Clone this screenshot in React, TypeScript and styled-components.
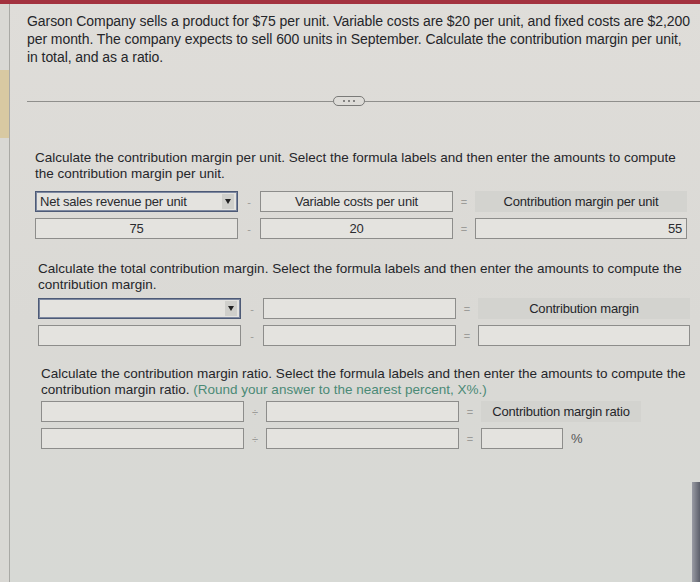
import React from 'react';
import styled, { createGlobalStyle } from 'styled-components';

const GlobalStyle = createGlobalStyle`
	html, body {
		margin: 0;
		padding: 0;
		width: 700px;
		height: 582px;
		overflow: hidden;
		background: #dcdbd7;
	}
	body {
		font-family: "Liberation Sans", Arial, sans-serif;
		color: #25262a;
	}
`

const Page = styled.div`
	width: 700px;
	height: 582px;
	display: flex;
	flex-direction: column;
	background: linear-gradient(180deg, #dfddd9 0%, #dad9d5 55%, #d7d9d5 100%);
`

const TopBar = styled.div`
	height: 4px;
	flex-shrink: 0;
	background: #a3323f;
`

const Frame = styled.div`
	flex: 1;
	display: flex;
`

const LeftRail = styled.div`
	width: 9px;
	flex-shrink: 0;
	border-right: 1px solid #a9a9a5;
	background: #d9d8d4;
	padding-top: 66px;

	.tab {
		height: 68px;
		background: #d8c9a2;
	}
`

const Main = styled.div`
	flex: 1;
	min-width: 0;
	display: flex;
	flex-direction: column;
	padding-left: 17px;
`

const RightRail = styled.div`
	width: 8px;
	flex-shrink: 0;
	display: flex;
	flex-direction: column;
	justify-content: flex-end;

	.edge {
		height: 100px;
		background: linear-gradient(90deg, #9a9ca4, #5c5f6a);
	}
`

const Question = styled.p`
	margin: 8px 0 0 0;
	font-size: 14px;
	line-height: 18px;
	letter-spacing: -0.07px;
	white-space: nowrap;
`

const Divider = styled.div`
	margin-top: 30px;
	margin-right: -8px;
	display: flex;
	align-items: center;

	&::before, &::after {
		content: '';
		flex: 1;
		height: 1px;
		background: #8f8f8c;
	}
	&::before {
		flex: 0 0 306px;
	}
`

const Pill = styled.div`
	width: 30px;
	height: 8px;
	border: 1px solid #7a7a78;
	border-radius: 5px;
	display: flex;
	align-items: center;
	justify-content: center;
	gap: 3px;

	span {
		width: 2px;
		height: 2px;
		border-radius: 50%;
		background: #666;
	}
`

const Section = styled.div<{ $indent: number; $top: number }>`
	margin-top: ${({ $top }) => $top}px;
	padding-left: ${({ $indent }) => $indent}px;
`

const Prompt = styled.p<{ $gap: number }>`
	margin: 0 0 ${({ $gap }) => $gap}px 0;
	font-size: 13.5px;
	line-height: 15.5px;
	letter-spacing: 0;
	white-space: nowrap;

	.hint {
		color: #4b8a76;
	}
`

const Formula = styled.div`
	display: grid;
	grid-template-columns: 203px 22px 193px 22px 212px;
	grid-auto-rows: 21px;
	row-gap: 6px;
	align-items: stretch;
`

const Box = styled.div<{ $select?: boolean; $align?: 'left' | 'center' | 'right' }>`
	box-sizing: border-box;
	border: 1px solid ${({ $select }) => $select ? '#4d5a76' : '#8d8d8b'};
	box-shadow: ${({ $select }) => $select ? 'inset 0 0 0 1px #7d88a0' : 'none'};
	background: #e4e3df;
	font-size: 13px;
	letter-spacing: -0.2px;
	display: flex;
	align-items: center;
	justify-content: ${({ $align }) => $align === 'left' ? 'flex-start' : $align === 'right' ? 'flex-end' : 'center'};
	padding: 0 4px;
	position: relative;
	color: #2a2b2f;
`

const Arrow = styled.span`
	position: absolute;
	right: 3px;
	top: 2px;
	bottom: 2px;
	width: 12px;
	background: #cfcfcb;
	display: flex;
	align-items: center;
	justify-content: center;

	&::after {
		content: '';
		border-left: 3px solid transparent;
		border-right: 3px solid transparent;
		border-top: 5px solid #222;
	}
`

const Op = styled.div`
	display: flex;
	align-items: center;
	justify-content: center;
	font-size: 11px;
	color: #9c9c99;
`

const LabelCell = styled.div<{ $width?: number }>`
	background: #d3d3cf;
	display: flex;
	align-items: center;
	justify-content: center;
	font-size: 13px;
	letter-spacing: -0.2px;
	width: ${({ $width }) => $width ? `${$width}px` : 'auto'};
`

const ResultCell = styled.div`
	display: flex;
	align-items: center;
	gap: 8px;
	font-size: 13px;
	color: #555;
`

const SmallBox = styled(Box)`
	width: 82px;
	height: 100%;
`

export default function App() {
	return (
		<Page>
			<GlobalStyle />
			<TopBar />
			<Frame>
				<LeftRail><div className="tab" /></LeftRail>
				<Main>
					<Question>
						Garson Company sells a product for $75 per unit. Variable costs are $20 per unit, and fixed costs are $2,200<br />
						per month. The company expects to sell 600 units in September. Calculate the contribution margin per unit,<br />
						in total, and as a ratio.
					</Question>
					<Divider>
						<Pill><span /><span /><span /></Pill>
					</Divider>

					<Section $indent={8} $top={44}>
						<Prompt $gap={10}>
							Calculate the contribution margin per unit. Select the formula labels and then enter the amounts to compute<br />
							the contribution margin per unit.
						</Prompt>
						<Formula>
							<Box $select $align="left">Net sales revenue per unit<Arrow /></Box>
							<Op>-</Op>
							<Box>Variable costs per unit</Box>
							<Op>=</Op>
							<LabelCell>Contribution margin per unit</LabelCell>
							<Box>75</Box>
							<Op>-</Op>
							<Box>20</Box>
							<Op>=</Op>
							<Box $align="right">55</Box>
						</Formula>
					</Section>

					<Section $indent={11} $top={22}>
						<Prompt $gap={6}>
							Calculate the total contribution margin. Select the formula labels and then enter the amounts to compute the<br />
							contribution margin.
						</Prompt>
						<Formula>
							<Box $select><Arrow /></Box>
							<Op>-</Op>
							<Box />
							<Op>=</Op>
							<LabelCell>Contribution margin</LabelCell>
							<Box />
							<Op>-</Op>
							<Box />
							<Op>=</Op>
							<Box />
						</Formula>
					</Section>

					<Section $indent={14} $top={20}>
						<Prompt $gap={4}>
							Calculate the contribution margin ratio. Select the formula labels and then enter the amounts to compute the<br />
							contribution margin ratio. <span className="hint">(Round your answer to the nearest percent, X%.)</span>
						</Prompt>
						<Formula>
							<Box />
							<Op>÷</Op>
							<Box />
							<Op>=</Op>
							<LabelCell $width={160}>Contribution margin ratio</LabelCell>
							<Box />
							<Op>÷</Op>
							<Box />
							<Op>=</Op>
							<ResultCell><SmallBox />%</ResultCell>
						</Formula>
					</Section>
				</Main>
				<RightRail><div className="edge" /></RightRail>
			</Frame>
		</Page>
	);
}
